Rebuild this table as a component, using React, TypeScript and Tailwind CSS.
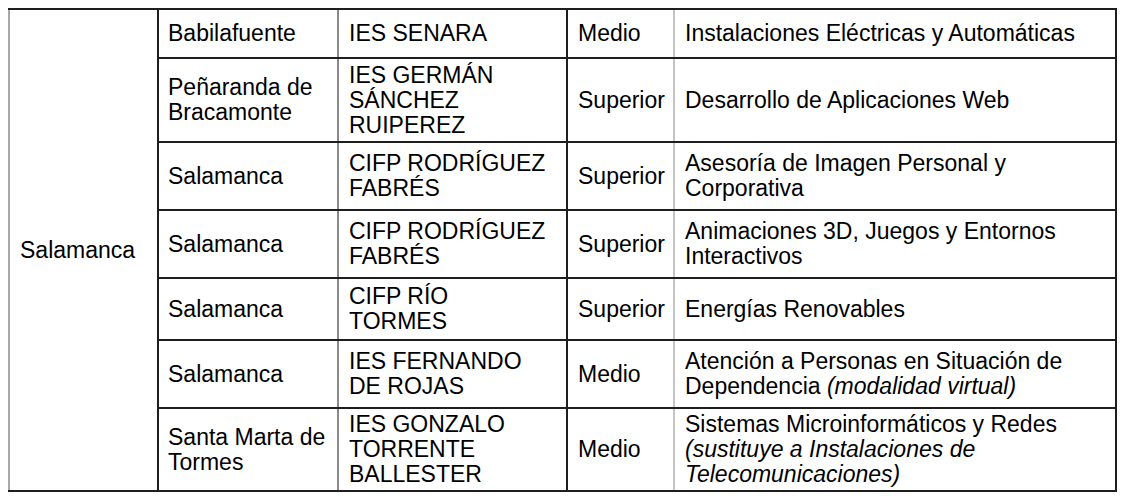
import React from "react";

type Row = {
    town: React.ReactNode;
    school: React.ReactNode;
    level: string;
    course: React.ReactNode;
    h: string;
};

const rows: Row[] = [
    {
        town: "Babilafuente",
        school: "IES SENARA",
        level: "Medio",
        course: "Instalaciones Eléctricas y Automáticas",
        h: "h-[49px]",
    },
    {
        town: (
            <>
                Peñaranda de
                <br />
                Bracamonte
            </>
        ),
        school: (
            <>
                IES GERMÁN
                <br />
                SÁNCHEZ
                <br />
                RUIPEREZ
            </>
        ),
        level: "Superior",
        course: "Desarrollo de Aplicaciones Web",
        h: "h-[84px]",
    },
    {
        town: "Salamanca",
        school: (
            <>
                CIFP RODRÍGUEZ
                <br />
                FABRÉS
            </>
        ),
        level: "Superior",
        course: (
            <>
                Asesoría de Imagen Personal y
                <br />
                Corporativa
            </>
        ),
        h: "h-[68px]",
    },
    {
        town: "Salamanca",
        school: (
            <>
                CIFP RODRÍGUEZ
                <br />
                FABRÉS
            </>
        ),
        level: "Superior",
        course: (
            <>
                Animaciones 3D, Juegos y Entornos
                <br />
                Interactivos
            </>
        ),
        h: "h-[68px]",
    },
    {
        town: "Salamanca",
        school: (
            <>
                CIFP RÍO
                <br />
                TORMES
            </>
        ),
        level: "Superior",
        course: "Energías Renovables",
        h: "h-[62px]",
    },
    {
        town: "Salamanca",
        school: (
            <>
                IES FERNANDO
                <br />
                DE ROJAS
            </>
        ),
        level: "Medio",
        course: (
            <>
                Atención a Personas en Situación de
                <br />
                Dependencia <em>(modalidad virtual)</em>
            </>
        ),
        h: "h-[68px]",
    },
    {
        town: (
            <>
                Santa Marta de
                <br />
                Tormes
            </>
        ),
        school: (
            <>
                IES GONZALO
                <br />
                TORRENTE
                <br />
                BALLESTER
            </>
        ),
        level: "Medio",
        course: (
            <>
                Sistemas Microinformáticos y Redes
                <br />
                <em>(sustituye a Instalaciones de</em>
                <br />
                <em>Telecomunicaciones)</em>
            </>
        ),
        h: "h-[83px]",
    },
];

export default function App() {
    return (
        <div className="w-[1126px] h-[498px] bg-white pt-[8px] pl-[8px] overflow-hidden">
            <table
                className="table-fixed border-collapse w-[1107px] text-[23px] leading-[25px] text-black"
                style={{ fontFamily: '"Liberation Sans", Arial, sans-serif' }}
            >
                <colgroup>
                    <col className="w-[149px]" />
                    <col className="w-[180px]" />
                    <col className="w-[229px]" />
                    <col className="w-[107px]" />
                    <col className="w-[442px]" />
                </colgroup>
                <tbody>
                    {rows.map((r, i) => (
                        <tr key={i} className={r.h}>
                            {/* first column spans the whole table */}
                            {i === 0 && (
                                <td
                                    rowSpan={rows.length}
                                    className="border-y-2 border-y-[#1e1e1e] border-l-2 border-l-[#a8a8a8] border-r-2 border-r-[#1e1e1e] pl-[10px] align-middle"
                                >
                                    Salamanca
                                </td>
                            )}
                            <td className="border-y-2 border-[#1e1e1e] pl-[9px] pr-[2px] align-middle">{r.town}</td>
                            <td className="border-y-2 border-y-[#1e1e1e] border-l-2 border-l-[#8a8a8a] pl-[10px] pr-[2px] align-middle">{r.school}</td>
                            <td className="border-y-2 border-y-[#1e1e1e] border-l-2 border-l-[#1e1e1e] pl-[10px] pr-[2px] align-middle whitespace-nowrap">{r.level}</td>
                            <td className="border-y-2 border-y-[#1e1e1e] border-l-2 border-l-[#c4c4c4] border-r-2 border-r-[#1e1e1e] pl-[10px] pr-[2px] align-middle">{r.course}</td>
                        </tr>
                    ))}
                </tbody>
            </table>
        </div>
    );
}
